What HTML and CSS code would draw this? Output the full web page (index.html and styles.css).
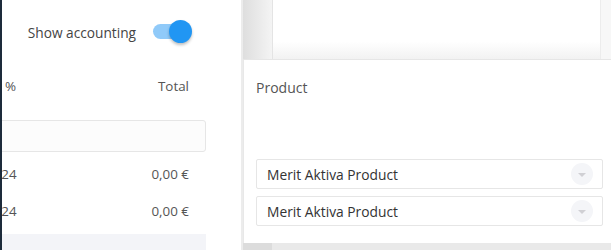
FILE: index.html
```html
<!DOCTYPE html>
<html lang="en">
<head>
  <meta charset="UTF-8" />
  <title>Accounting</title>
  <link rel="stylesheet" href="styles.css">
</head>
<body>

<div class="page">
  <div class="ledger">
    <div class="ledger-inner">
      <div class="toggle-row">
        <span class="toggle-label">Show accounting</span>
        <span class="switch"><span class="knob"></span></span>
      </div>

      <div class="row head">
        <span class="cell pct">%</span>
        <span class="cell total">Total</span>
      </div>

      <div class="filter"></div>

      <div class="row">
        <span class="cell">2024</span>
        <span class="cell total">0,00 €</span>
      </div>
      <div class="row">
        <span class="cell">2024</span>
        <span class="cell total">0,00 €</span>
      </div>

      <div class="row grey"></div>
    </div>
  </div>

  <div class="side">
    <div class="side-top">
      <div class="shade"></div>
      <div class="card"></div>
      <div class="edge"></div>
    </div>

    <div class="products">
      <p class="label">Product</p>
      <div class="select">
        <span>Merit Aktiva Product</span>
        <span class="arrow"></span>
      </div>
      <div class="select">
        <span>Merit Aktiva Product</span>
        <span class="arrow"></span>
      </div>
    </div>
    <div class="side-bottom"></div>
  </div>
</div>

</body>
</html>
```

FILE: styles.css
```css
body {
  font-family: "Open Sans", Arial, sans-serif;
  margin: 0;
  padding: 0;
  background-color: #ececec;
  overflow: hidden;
}

.page {
  display: flex;
  width: 611px;
  height: 250px;
  overflow: hidden;
}

.ledger {
  width: 239px;
  flex-shrink: 0;
  background-color: #fff;
  border-left: 2px solid #1d2b3b;
  border-right: 2px solid #ececec;
  overflow: hidden;
}

.ledger-inner {
  width: 224px;
  margin-left: -20px;
}

.toggle-row {
  display: flex;
  align-items: center;
  justify-content: flex-end;
  height: 64px;
  padding-right: 19px;
  gap: 17px;
  font-size: 13.7px;
  color: #444;
}

.switch {
  position: relative;
  width: 34px;
  height: 15px;
  border-radius: 8px;
  background-color: #90caf9;
  margin-top: -2px;
}

.knob {
  position: absolute;
  top: -4px;
  left: 16px;
  width: 23px;
  height: 23px;
  border-radius: 50%;
  background-color: #2196f3;
  box-shadow: 0 2px 3px rgba(0, 0, 0, 0.25);
}

.row {
  display: flex;
  justify-content: space-between;
  align-items: center;
  height: 37px;
  font-size: 13.4px;
  color: #555;
}

.row.head {
  height: 44px;
}

.cell {
  padding-left: 4px;
}

.cell.pct {
  padding-left: 23px;
}

.cell.total {
  padding-right: 17px;
}

.filter {
  height: 30px;
  margin: 12px 0 3px;
  border: 1px solid #e6e6e6;
  border-radius: 3px;
  background-color: #fcfcfc;
}

.row.grey {
  margin-top: 5px;
  background-color: #f3f4f8;
}

.side {
  flex: 1;
  display: flex;
  flex-direction: column;
}

.side-top {
  display: flex;
  height: 59px;
  flex-shrink: 0;
  border-bottom: 1px solid #e6e6e6;
}

.shade {
  width: 29px;
  background: linear-gradient(to right, #dedede, #f4f4f4);
}

.card {
  flex: 1;
  background: linear-gradient(to bottom, #fff 70%, #f2f2f2);
  border-left: 1px solid #e4e4e4;
  border-right: 1px solid #ececec;
}

.edge {
  width: 10px;
  background-color: #f7f7f7;
}

.products {
  flex: 1;
  background-color: #fff;
  border-left: 1px solid #e8e8e8;
  padding: 18px 0 0 12px;
}

.label {
  margin: 0 0 62px;
  font-size: 14px;
  color: #555;
}

.select {
  display: flex;
  align-items: center;
  justify-content: space-between;
  width: 335px;
  height: 28px;
  margin-bottom: 7px;
  padding-left: 10px;
  border: 1px solid #e6e6e6;
  border-radius: 2px;
  font-size: 13.8px;
  color: #333;
  box-sizing: content-box;
}

.arrow {
  position: relative;
  width: 22px;
  height: 22px;
  margin-right: 9px;
  border-radius: 50%;
  background-color: #f4f5f8;
}

.arrow::after {
  content: "";
  position: absolute;
  left: 7px;
  top: 10px;
  border-left: 4px solid transparent;
  border-right: 4px solid transparent;
  border-top: 4px solid #d0d0d4;
}

.side-bottom {
  height: 7px;
  flex-shrink: 0;
  background: linear-gradient(to right, #dcdcdc 29px, #e9e9e9 29px);
}
```
